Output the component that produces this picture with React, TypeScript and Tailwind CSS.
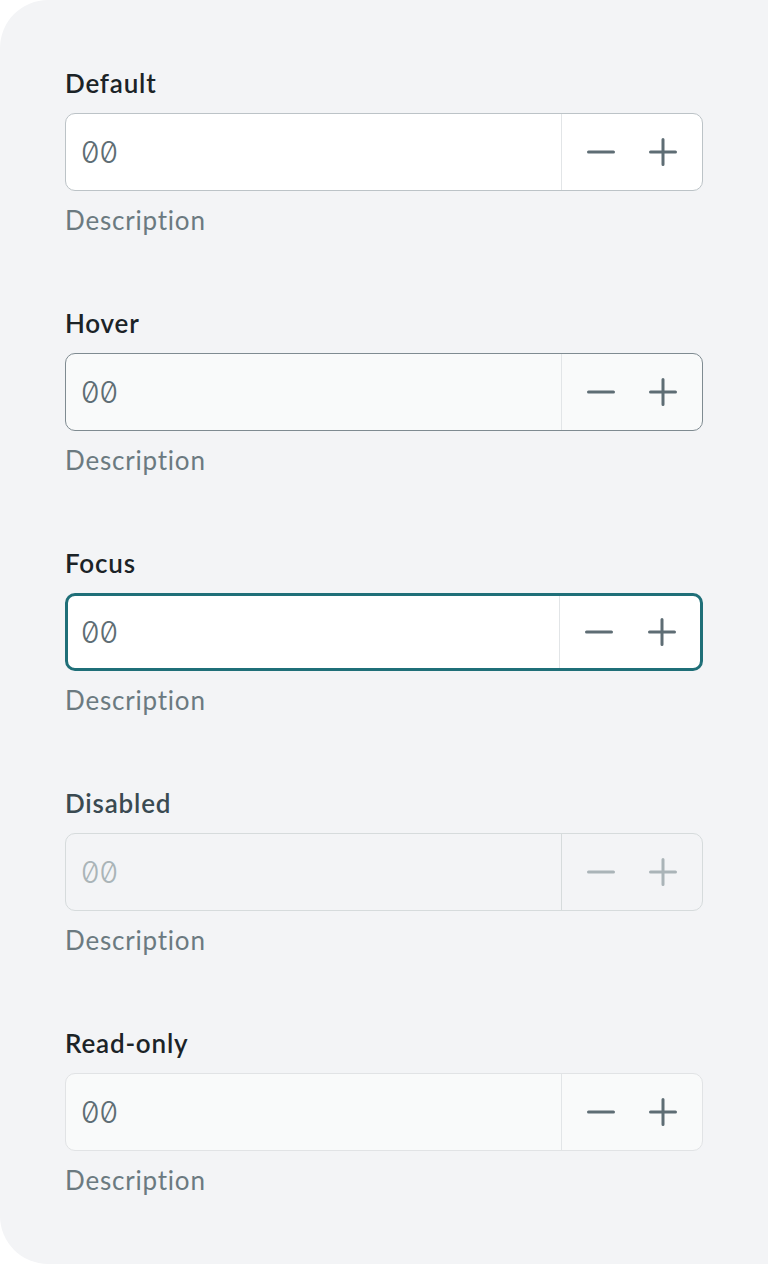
import React from "react";

type State = "default" | "hover" | "focus" | "disabled" | "readonly";

const fields: { label: string; state: State }[] = [
  { label: "Default", state: "default" },
  { label: "Hover", state: "hover" },
  { label: "Focus", state: "focus" },
  { label: "Disabled", state: "disabled" },
  { label: "Read-only", state: "readonly" },
];

const boxStyles: Record<State, string> = {
  default: "border border-[#bcc3c7] bg-white",
  hover: "border border-[#7f8b91] bg-[#f9fafa]",
  focus: "border-[3px] border-[#1f6f78] bg-white",
  disabled: "border border-[#d6dbdc] bg-[#f3f4f6]",
  readonly: "border border-[#e1e3e5] bg-[#f9fafa]",
};

const Minus = ({ color }: { color: string }) => (
  <svg width="28" height="28" viewBox="0 0 28 28" fill="none">
    <path d="M1.5 14h25" stroke={color} strokeWidth="3" strokeLinecap="round" />
  </svg>
);

const Plus = ({ color }: { color: string }) => (
  <svg width="28" height="28" viewBox="0 0 28 28" fill="none">
    <path d="M1.5 14h25M14 1.5v25" stroke={color} strokeWidth="3" strokeLinecap="round" />
  </svg>
);

const NumberField = ({ label, state }: { label: string; state: State }) => {
  const disabled = state === "disabled";
  const iconColor = disabled ? "#aab4b8" : "#5e6d74";
  const focus = state === "focus";

  return (
    <div className="flex flex-col">
      <div
        className={`text-[26px] leading-[32px] font-semibold tracking-[0.8px] ${
          disabled ? "text-[#3a4a51]" : "text-[#1b2327]"
        }`}
      >
        {label}
      </div>
      <div className={`mt-[14px] flex h-[78px] rounded-[10px] ${boxStyles[state]}`}>
        <div
          className={`flex flex-1 items-center ${focus ? "pl-[13px]" : "pl-[15px]"} text-[30px] font-light slashed-zero ${
            disabled ? "text-[#aab4b8]" : "text-[#5e6d74]"
          }`}
          style={{ fontFamily: "Inter, sans-serif" }}
        >
          00
        </div>
        <div
          className={`flex w-[141px] items-center justify-between border-l ${
            disabled ? "border-[#d6dbdc]" : "border-[#e2e5e7]"
          } ${focus ? "pl-[25px] pr-[24px]" : "pl-[25px] pr-[25px]"}`}
        >
          <Minus color={iconColor} />
          <Plus color={iconColor} />
        </div>
      </div>
      <div className="mt-[13px] text-[26px] leading-[32px] tracking-[0.8px] text-[#6b7a80]">
        Description
      </div>
    </div>
  );
};

export default function App() {
  return (
    <div className="min-h-[1264px] bg-white" style={{ fontFamily: "Lato, sans-serif" }}>
      <div className="flex min-h-[1264px] flex-col gap-[71px] rounded-l-[48px] bg-[#f3f4f6] px-[65px] pt-[67px]">
        {fields.map((f) => (
          <NumberField key={f.label} label={f.label} state={f.state} />
        ))}
      </div>
    </div>
  );
}
